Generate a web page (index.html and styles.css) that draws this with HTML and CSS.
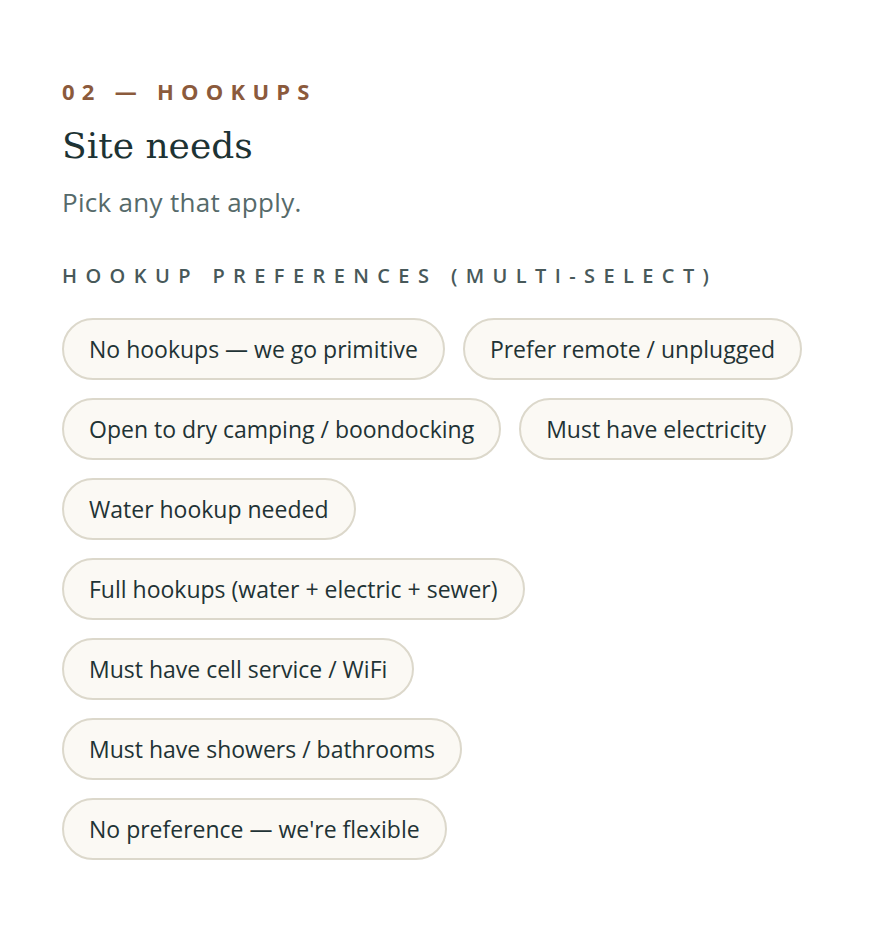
FILE: index.html
```html
<!DOCTYPE html>
<html lang="en">
<head>
    <meta charset="UTF-8">
    <meta name="viewport" content="width=device-width, initial-scale=1.0">
    <title>Site needs</title>
    <link rel="stylesheet" href="styles.css">
</head>
<body>
    <section class="step">
        <p class="eyebrow">02 — Hookups</p>
        <h1>Site needs</h1>
        <p class="hint">Pick any that apply.</p>

        <p class="group-label">Hookup preferences (multi-select)</p>
        <div class="chips">
            <button class="chip">No hookups — we go primitive</button>
            <button class="chip">Prefer remote / unplugged</button>
            <button class="chip">Open to dry camping / boondocking</button>
            <button class="chip">Must have electricity</button>
            <button class="chip">Water hookup needed</button>
            <button class="chip">Full hookups (water + electric + sewer)</button>
            <button class="chip">Must have cell service / WiFi</button>
            <button class="chip">Must have showers / bathrooms</button>
            <button class="chip">No preference — we're flexible</button>
        </div>
    </section>
</body>
</html>
```

FILE: styles.css
```css
body {
    font-family: 'Open Sans', Lato, sans-serif;
    background-color: #fff;
    margin: 0;
    padding: 0;
    color: #1f3335;
}

.step {
    max-width: 762px;
    padding: 76px 62px 40px;
}

.eyebrow {
    margin: 0;
    font-size: 22px;
    font-weight: 700;
    letter-spacing: 0.33em;
    text-transform: uppercase;
    color: #8b5a3c;
    line-height: 30px;
}

h1 {
    font-family: 'DejaVu Serif', 'Liberation Serif', serif;
    font-size: 36px;
    font-weight: 400;
    color: #1d3334;
    margin: 16px 0 0;
    line-height: 48px;
}

.hint {
    margin: 15px 0 0;
    font-size: 26px;
    letter-spacing: 0.3px;
    color: #566a6a;
    line-height: 34px;
}

.group-label {
    margin: 44px 0 0;
    font-size: 20px;
    font-weight: 600;
    letter-spacing: 0.42em;
    text-transform: uppercase;
    color: #48595a;
    line-height: 26px;
}

.chips {
    display: flex;
    flex-wrap: wrap;
    gap: 18px;
    margin-top: 29px;
}

.chip {
    font-family: inherit;
    font-size: 23px;
    line-height: 26px;
    color: #1f3335;
    background: #fbf9f4;
    border: 2px solid #dcd8cb;
    border-radius: 999px;
    padding: 16px 25px;
    cursor: pointer;
}

.chip:hover {
    border-color: #c9c3b1;
}
```
